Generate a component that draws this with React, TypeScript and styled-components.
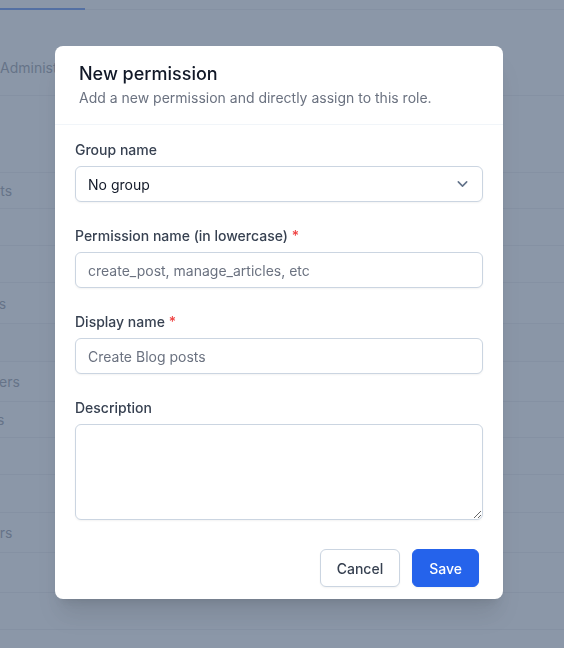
import styled, { createGlobalStyle } from "styled-components";

const GlobalStyle = createGlobalStyle`
  * {
    box-sizing: border-box;
  }
  body {
    margin: 0;
    background: #ffffff;
    font-family: Inter, "Noto Sans", "Liberation Sans", sans-serif;
    color: #111827;
  }
`;

const StPage = styled.div`
  width: 100%;
  height: 648px;
  overflow: hidden;
  background: #ffffff;
`;

const StTabs = styled.div`
  display: flex;
  height: 10px;
  border-bottom: 1px solid #e5e7eb;
`;

const StTab = styled.div<{ $active?: boolean }>`
  width: 85px;
  height: 10px;
  border-bottom: 2px solid ${({ $active }) => ($active ? "#2563eb" : "transparent")};
`;

const StSection = styled.div`
  height: 86px;
  padding-top: 48px;
  border-bottom: 1px solid #e5e7eb;
  font-size: 14px;
  line-height: 20px;
  color: #6b7280;
  white-space: nowrap;
`;

const StRow = styled.div<{ $h: number; $band?: boolean }>`
  display: flex;
  align-items: center;
  height: ${({ $h }) => $h}px;
  border-bottom: 1px solid #e5e7eb;
  background: ${({ $band }) => ($band ? "#f9fafb" : "#ffffff")};
  font-size: 14px;
  color: #6b7280;
  white-space: nowrap;
`;

/* the table is scrolled sideways, so the names start left of the window */
const StCell = styled.span`
  margin-left: -53px;
`;

const StOverlay = styled.div`
  position: fixed;
  inset: 0;
  display: flex;
  align-items: flex-start;
  padding: 46px 0 0 55px;
  background: rgba(100, 116, 139, 0.75);
`;

const StModal = styled.div`
  width: 448px;
  border-radius: 8px;
  background: #ffffff;
  box-shadow: 0 20px 25px -5px rgba(0, 0, 0, 0.1), 0 8px 10px -6px rgba(0, 0, 0, 0.1);
  overflow: hidden;
`;

const StHeader = styled.div`
  padding: 14px 24px 16px;
  border-bottom: 1px solid #f1f5f9;
`;

const StTitle = styled.h2`
  margin: 0;
  font-size: 18px;
  line-height: 28px;
  font-weight: 500;
  color: #111827;
`;

const StSubtitle = styled.p`
  margin: 0;
  font-size: 14px;
  line-height: 20px;
  color: #6b7280;
`;

const StBody = styled.div`
  display: flex;
  flex-direction: column;
  gap: 24px;
  padding: 15px 20px 17px;
`;

const StField = styled.div`
  display: flex;
  flex-direction: column;
  gap: 6px;
`;

const StLabel = styled.label`
  font-size: 14px;
  line-height: 20px;
  font-weight: 500;
  color: #374151;
`;

const StRequired = styled.span`
  color: #ef4444;
`;

const StSelectWrap = styled.div`
  position: relative;
  display: flex;
  align-items: center;
  height: 36px;
  padding: 0 12px;
  border: 1px solid #cbd5e1;
  border-radius: 6px;
  background: #ffffff;
  box-shadow: 0 1px 2px rgba(0, 0, 0, 0.05);
  font-size: 14px;
  color: #111827;

  svg {
    position: absolute;
    right: 9px;
    top: 50%;
    transform: translateY(-50%);
  }
`;

const StInput = styled.input`
  height: 36px;
  padding: 0 12px;
  border: 1px solid #cbd5e1;
  border-radius: 6px;
  background: #ffffff;
  box-shadow: 0 1px 2px rgba(0, 0, 0, 0.05);
  font-family: inherit;
  font-size: 14px;
  color: #111827;
  outline: none;

  &::placeholder {
    color: #6b7280;
  }
`;

const StTextarea = styled.textarea`
  height: 96px;
  padding: 8px 12px;
  border: 1px solid #cbd5e1;
  border-radius: 6px;
  background: #ffffff;
  box-shadow: 0 1px 2px rgba(0, 0, 0, 0.05);
  font-family: inherit;
  font-size: 14px;
  outline: none;
`;

const StFooter = styled.div`
  display: flex;
  justify-content: flex-end;
  gap: 12px;
  padding: 12px 24px 12px;
`;

const StButton = styled.button<{ $primary?: boolean }>`
  height: 38px;
  padding: 0 16px;
  border: 1px solid ${({ $primary }) => ($primary ? "#2563eb" : "#cbd5e1")};
  border-radius: 6px;
  background: ${({ $primary }) => ($primary ? "#2563eb" : "#ffffff")};
  color: ${({ $primary }) => ($primary ? "#ffffff" : "#374151")};
  font-family: inherit;
  font-size: 14px;
  font-weight: 500;
  box-shadow: 0 1px 2px rgba(0, 0, 0, 0.05);
  cursor: pointer;
`;

const rows = [
  { h: 77, text: "" },
  { h: 36, text: "Edit posts" },
  { h: 37, text: "" },
  { h: 37, text: "" },
  { h: 41, text: "Add tags" },
  { h: 38, text: "", band: true },
  { h: 40, text: "View users" },
  { h: 36, text: "Edit tags" },
  { h: 37, text: "" },
  { h: 38, text: "" },
  { h: 40, text: "Edit users" },
  { h: 40, text: "" },
  { h: 37, text: "" },
  { h: 37, text: "" },
];

const Chevron = () => (
  <svg width="21" height="21" viewBox="0 0 20 20" fill="none">
    <path d="M6 8l4 4 4-4" stroke="#64748b" strokeWidth="1.5" strokeLinecap="round" strokeLinejoin="round" />
  </svg>
);

const App = () => {
  return (
    <>
      <GlobalStyle />
      <StPage>
        <StTabs>
          <StTab $active />
          <StTab />
        </StTabs>
        <StSection>Administrator</StSection>
        {rows.map((row, i) => (
          <StRow key={i} $h={row.h} $band={row.band}>
            {row.text && <StCell>{row.text}</StCell>}
          </StRow>
        ))}
      </StPage>
      <StOverlay>
        <StModal>
          <StHeader>
            <StTitle>New permission</StTitle>
            <StSubtitle>Add a new permission and directly assign to this role.</StSubtitle>
          </StHeader>
          <StBody>
            <StField>
              <StLabel>Group name</StLabel>
              <StSelectWrap>
                No group
                <Chevron />
              </StSelectWrap>
            </StField>
            <StField>
              <StLabel>
                Permission name (in lowercase) <StRequired>*</StRequired>
              </StLabel>
              <StInput placeholder="create_post, manage_articles, etc" />
            </StField>
            <StField>
              <StLabel>
                Display name <StRequired>*</StRequired>
              </StLabel>
              <StInput placeholder="Create Blog posts" />
            </StField>
            <StField>
              <StLabel>Description</StLabel>
              <StTextarea />
            </StField>
          </StBody>
          <StFooter>
            <StButton>Cancel</StButton>
            <StButton $primary>Save</StButton>
          </StFooter>
        </StModal>
      </StOverlay>
    </>
  );
};

export default App;
